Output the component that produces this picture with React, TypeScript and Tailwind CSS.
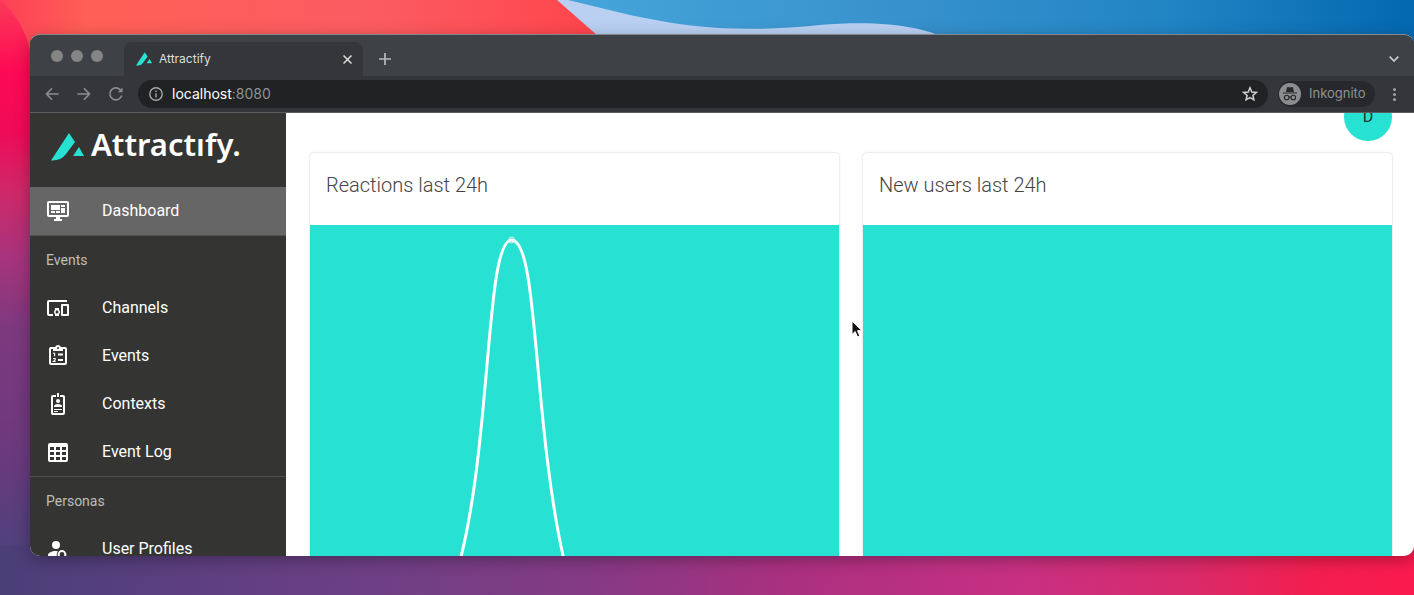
import type { ReactNode } from "react";

const TEAL = "#27e2d2";

function Wallpaper() {
  return (
    <svg
      aria-hidden="true"
      className="absolute inset-0 h-full w-full"
      viewBox="0 0 1414 595"
      preserveAspectRatio="none"
    >
      <defs>
        <linearGradient id="coral" x1="0" y1="0" x2="1" y2="0">
          <stop offset="0" stopColor="#fd3f57" />
          <stop offset="0.14" stopColor="#ff5f55" />
          <stop offset="0.6" stopColor="#fb5c62" />
          <stop offset="1" stopColor="#ff4249" />
        </linearGradient>
        <linearGradient id="side" x1="0" y1="0" x2="0" y2="1">
          <stop offset="0" stopColor="#fb3a58" />
          <stop offset="0.12" stopColor="#fd0a54" />
          <stop offset="0.22" stopColor="#f00a58" />
          <stop offset="0.32" stopColor="#cf2868" />
          <stop offset="0.43" stopColor="#a8337c" />
          <stop offset="0.55" stopColor="#7d397e" />
          <stop offset="0.75" stopColor="#6d397e" />
          <stop offset="0.9" stopColor="#53407c" />
          <stop offset="1" stopColor="#4a3f78" />
        </linearGradient>
        <linearGradient id="floor" x1="0" y1="0" x2="1" y2="0">
          <stop offset="0" stopColor="#4a3f78" />
          <stop offset="0.15" stopColor="#5f3f80" />
          <stop offset="0.28" stopColor="#703f85" />
          <stop offset="0.42" stopColor="#853a84" />
          <stop offset="0.56" stopColor="#ab3080" />
          <stop offset="0.72" stopColor="#c73082" />
          <stop offset="0.84" stopColor="#d92a6b" />
          <stop offset="0.93" stopColor="#f31e4f" />
          <stop offset="1" stopColor="#fb1a4e" />
        </linearGradient>
        <linearGradient id="sky" x1="0" y1="0" x2="1" y2="0">
          <stop offset="0" stopColor="#45a5da" />
          <stop offset="0.35" stopColor="#3a93cd" />
          <stop offset="0.7" stopColor="#2285c4" />
          <stop offset="1" stopColor="#0468b0" />
        </linearGradient>
      </defs>
      <rect width="1414" height="595" fill="url(#side)" />
      <rect y="545" width="1414" height="50" fill="url(#floor)" />
      <path d="M0 0H620V50H30Q22 18 0 0Z" fill="url(#coral)" />
      <path d="M557 0H1414V50H614Z" fill="#b9d0f3" />
      <path d="M568 0H1414V50H965C930 22 870 21 820 25C740 33 690 28 630 15Z" fill="url(#sky)" />
    </svg>
  );
}

function Mark({ className }: { className: string }) {
  return (
    <svg aria-hidden="true" className={className} viewBox="0 0 33 28" fill={TEAL}>
      <path d="M18 0L24 9L15 21Q10 28 0 27.500Z" />
      <path d="M28 14L33 23H22Z" />
    </svg>
  );
}

function Icon({ children, className = "size-6" }: { children: ReactNode; className?: string }) {
  return (
    <svg aria-hidden="true" className={`${className} shrink-0`} viewBox="0 0 24 24" fill="currentColor">
      {children}
    </svg>
  );
}

const icons = {
  dashboard: (
    <path d="M21,16V4H3V16H21M21,2A2,2 0 0,1 23,4V16A2,2 0 0,1 21,18H14V20H16V22H8V20H10V18H3C1.89,18 1,17.1 1,16V4C1,2.89 1.89,2 3,2H21M5,6H14V11H5V6M15,6H19V8H15V6M19,9V14H15V9H19M5,12H9V14H5V12M10,12H14V14H10V12Z" />
  ),
  channels: (
    <path d="M3 6h18V4H3c-1.1 0-2 .9-2 2v12c0 1.1.9 2 2 2h4v-2H3V6zm10 6H9v1.78c-.61.55-1 1.33-1 2.22s.39 1.67 1 2.22V20h4v-1.78c.61-.55 1-1.34 1-2.22s-.39-1.67-1-2.22V12zm-2 5.500c-.83 0-1.5-.67-1.5-1.5s.67-1.5 1.5-1.5 1.5.67 1.5 1.5-.67 1.5-1.5 1.5zM22 8h-6c-.5 0-1 .5-1 1v10c0 .5.5 1 1 1h6c.5 0 1-.5 1-1V9c0-.5-.5-1-1-1zm-1 10h-4v-8h4v8z" />
  ),
  events: (
    <>
      <path
        fillRule="evenodd"
        d="M19 3H14.820C14.4 1.840 13.3 1 12 1S9.600 1.840 9.180 3H5C3.900 3 3 3.900 3 5V19C3 20.100 3.900 21 5 21H19C20.100 21 21 20.100 21 19V5C21 3.900 20.100 3 19 3ZM12 3A1 1 0 1 1 12 5A1 1 0 1 1 12 3ZM5 5H7V7H17V5H19V19H5Z"
      />
      <path d="M12 9.500H17V11.500H12ZM12 15H17V17H12Z" />
      <path d="M7 9.200H8.600V12.200M7 14.500H9.200V15.800L7.300 17.500H9.700" fill="none" stroke="currentColor" strokeWidth="1.1" />
    </>
  ),
  contexts: (
    <path d="M17,3H14V5H17V21H7V5H10V3H7A2,2 0 0,0 5,5V21A2,2 0 0,0 7,23H17A2,2 0 0,0 19,21V5A2,2 0 0,0 17,3M12,7A2,2 0 0,1 14,9A2,2 0 0,1 12,11A2,2 0 0,1 10,9A2,2 0 0,1 12,7M16,15H8V14C8,12.67 10.67,12 12,12C13.33,12 16,12.67 16,14V15M16,18H8V17H16V18M12,20H8V19H12V20M13,5H11V1H13V5Z" />
  ),
  log: (
    <path d="M4,3H20A2,2 0 0,1 22,5V20A2,2 0 0,1 20,22H4A2,2 0 0,1 2,20V5A2,2 0 0,1 4,3M4,7V10H8V7H4M10,7V10H14V7H10M20,10V7H16V10H20M4,12V15H8V12H4M4,20H8V17H4V20M10,12V15H14V12H10M10,20H14V17H10V20M20,20V17H16V20H20M20,12H16V15H20V12Z" />
  ),
  profiles: (
    <>
      <circle cx="10" cy="8" r="4" />
      <path d="M2 20V18C2 15.800 5.600 14 10 14Q11 14 11.800 14.200Q10.500 16 10.700 18.500L11 20Z" />
      <circle cx="16" cy="17.500" r="3.400" fill="none" stroke="currentColor" strokeWidth="2" />
    </>
  ),
};

function NavItem({ icon, label, active = false }: { icon: ReactNode; label: string; active?: boolean }) {
  return (
    <li>
      <a
        href="#"
        aria-current={active ? "page" : undefined}
        className={`flex h-12 items-center gap-8 px-4 text-base text-white ${active ? "bg-[#666666]" : ""}`}
      >
        <Icon>{icon}</Icon>
        {label}
      </a>
    </li>
  );
}

function Sidebar() {
  return (
    <aside className="w-64 shrink-0 overflow-hidden bg-[#343533]">
      <a href="#" className="flex h-[74px] items-start gap-[7px] pt-3 pl-[21px] text-white">
        <Mark className="mt-2 h-7 w-[33px]" />
        <span className="font-['Noto_Sans',sans-serif] text-[31px] leading-[38px] font-semibold">Attractıfy.</span>
      </a>
      <nav>
        <ul className="border-b border-[#555654]">
          <NavItem icon={icons.dashboard} label="Dashboard" active />
        </ul>
        <h2 className="flex h-12 items-center px-4 text-sm text-[#bdbdbc]">Events</h2>
        <ul>
          <NavItem icon={icons.channels} label="Channels" />
          <NavItem icon={icons.events} label="Events" />
          <NavItem icon={icons.contexts} label="Contexts" />
          <NavItem icon={icons.log} label="Event Log" />
        </ul>
        <h2 className="flex h-[49px] items-center border-t border-[#4e4f4e] px-4 text-sm text-[#bdbdbc]">Personas</h2>
        <ul>
          <NavItem icon={icons.profiles} label="User Profiles" />
        </ul>
      </nav>
    </aside>
  );
}

function ChartCard({ title, children }: { title: string; children?: ReactNode }) {
  return (
    <section className="flex min-w-0 flex-1 flex-col rounded-t shadow-[0_0_2px_rgba(0,0,0,0.25)]">
      <h2 className="flex h-[72px] items-center px-4 pb-2 text-xl font-light text-[#444444]">{title}</h2>
      <div className="min-h-0 flex-1 overflow-hidden bg-[#27e2d2]">{children}</div>
    </section>
  );
}

function BrowserChrome() {
  return (
    <header className="shrink-0 border-b border-[#5a5c5f] bg-[#35363a] font-[Inter,sans-serif] text-[#9aa0a6]">
      <div className="flex h-[41px] items-end bg-[#3e4246]">
        <div className="flex h-10 w-[94px] items-center gap-2 pl-[21px]">
          <span className="size-3 rounded-full bg-[#858585]" />
          <span className="size-3 rounded-full bg-[#858585]" />
          <span className="size-3 rounded-full bg-[#858585]" />
        </div>
        <div className="flex h-[34px] w-[239px] items-center rounded-t-lg bg-[#35363a] pr-2 pl-3 text-xs text-[#dddddd]">
          <Mark className="h-[14px] w-4" />
          <span className="ml-[7px] flex-1">Attractify</span>
          <button aria-label="Close tab" className="flex size-4 items-center justify-center">
            <svg className="size-[9px]" viewBox="0 0 9 9" stroke="currentColor" strokeWidth="1.5">
              <path d="M.5 .5L8.500 8.500M8.500 .5L.5 8.500" />
            </svg>
          </button>
        </div>
        <button aria-label="New tab" className="ml-4 flex h-[34px] items-center text-[#b8babc]">
          <svg className="size-3" viewBox="0 0 12 12" stroke="currentColor" strokeWidth="1.7">
            <path d="M6 0V12M0 6H12" />
          </svg>
        </button>
        <button aria-label="Search tabs" className="mr-[15px] ml-auto flex h-[34px] items-center text-[#cccccc]">
          <svg className="h-[6px] w-[10px]" viewBox="0 0 10 6" fill="none" stroke="currentColor" strokeWidth="1.7">
            <path d="M.7 .7L5 5L9.300 .7" />
          </svg>
        </button>
      </div>
      <div className="flex h-9 items-center pr-[18px] pl-[14px] text-[#8b8d90]">
        <button aria-label="Back" className="mr-4">
          <Icon className="size-4">
            <path d="M22 10.800H6.500L13 4.300L11.300 2.500L2 12L11.300 21.500L13 19.700L6.500 13.200H22Z" />
          </Icon>
        </button>
        <button aria-label="Forward" className="mr-4">
          <Icon className="size-4">
            <path d="M2 10.800H17.500L11 4.300L12.700 2.500L22 12L12.700 21.500L11 19.700L17.500 13.200H2Z" />
          </Icon>
        </button>
        <button aria-label="Reload" className="mr-[14px]">
          <svg className="size-4" viewBox="0 0 16 16" fill="none" stroke="currentColor" strokeWidth="1.6">
            <path d="M13.700 9.500A6 6 0 1 1 12.300 3.800L14 5.500" />
            <path d="M14.500 1.500V6.200H9.800Z" fill="currentColor" stroke="none" />
          </svg>
        </button>
        <div className="flex h-7 min-w-0 flex-1 items-center rounded-full bg-[#202224] pr-[10px] pl-[11px]">
          <svg aria-hidden="true" className="size-[14px] shrink-0" viewBox="0 0 14 14" fill="none" stroke="#a5a7a9" strokeWidth="1.4">
            <circle cx="7" cy="7" r="6.200" />
            <path d="M7 6.200V10.500M7 3.500V5" />
          </svg>
          <div className="ml-[9px] flex-1 text-sm text-[#8f9194]">
            <span className="text-white">localhost</span>:8080
          </div>
          <button aria-label="Bookmark this page" className="text-[#d0d0d0]">
            <svg className="size-4" viewBox="0 0 16 16" fill="none" stroke="currentColor" strokeWidth="1.500">
              <path d="M8 1.800L9.800 6L14.300 6.400L10.900 9.400L11.900 13.800L8 11.500L4.100 13.800L5.100 9.400L1.700 6.400L6.200 6Z" />
            </svg>
          </button>
        </div>
        <div className="ml-[10px] flex h-[26px] w-[97px] shrink-0 items-center gap-[7px] rounded-full bg-[#27282b] text-[13px] text-[#8f9194]">
          <svg aria-hidden="true" className="size-6 shrink-0" viewBox="0 0 24 24">
            <circle cx="12" cy="12" r="11" fill="#8b8d8f" />
            <path d="M8 10L9 5.500Q9.300 4.600 10.200 5L12 5.600L13.800 5Q14.700 4.600 15 5.500L16 10ZM5 10.500H19V11.600H5Z" fill="#27282b" />
            <g fill="none" stroke="#27282b" strokeWidth="1.100">
              <circle cx="8.700" cy="15.500" r="2.300" />
              <circle cx="15.300" cy="15.500" r="2.300" />
              <path d="M11 15.300Q12 14.500 13 15.300" />
            </g>
          </svg>
          Inkognito
        </div>
        <button aria-label="Browser menu" className="ml-[18px] flex flex-col gap-[2px]">
          <span className="size-[3px] rounded-full bg-[#a0a0a0]" />
          <span className="size-[3px] rounded-full bg-[#a0a0a0]" />
          <span className="size-[3px] rounded-full bg-[#a0a0a0]" />
        </button>
      </div>
    </header>
  );
}

export default function App() {
  return (
    <div className="relative flex h-screen flex-col overflow-hidden pt-[34px] pb-[39px] pl-[30px] font-[Roboto,sans-serif]">
      <Wallpaper />
      <div className="relative flex min-h-0 flex-1 flex-col overflow-hidden rounded-[10px] border-t border-[#85888a] bg-white shadow-[0_4px_16px_rgba(0,0,0,0.3)]">
        <BrowserChrome />
        <div className="flex min-h-0 flex-1">
          <Sidebar />
          <main className="flex min-w-0 flex-1 flex-col overflow-hidden pr-[22px] pl-6">
            <div className="flex h-10 shrink-0 items-end justify-end pb-3">
              <button className="flex size-12 shrink-0 items-center justify-center rounded-full bg-[#27e2d2] text-base text-[#24302f]">
                D
              </button>
            </div>
            <div className="flex min-h-0 flex-1 gap-6">
              <ChartCard title="Reactions last 24h">
                <svg
                  role="img"
                  aria-label="Reactions last 24h"
                  className="h-full w-full"
                  viewBox="0 0 530 331"
                  preserveAspectRatio="none"
                  fill="none"
                  stroke="#ffffff"
                >
                  <path
                    d="M151 333C182 210 176 15 202 15C229 15 223 195 254 333"
                    strokeWidth="3"
                  />
                  <circle cx="202" cy="15" r="3" stroke="#d9f3f0" />
                </svg>
              </ChartCard>
              <ChartCard title="New users last 24h" />
            </div>
          </main>
        </div>
      </div>
      <svg aria-hidden="true" className="absolute top-[320px] left-[851px] h-[18px] w-3" viewBox="0 0 12 18">
        <path
          d="M1 1V14.500L4.200 11.500L6.500 17L8.800 16L6.500 10.700H11Z"
          fill="#111111"
          stroke="#ffffff"
        />
      </svg>
    </div>
  );
}
